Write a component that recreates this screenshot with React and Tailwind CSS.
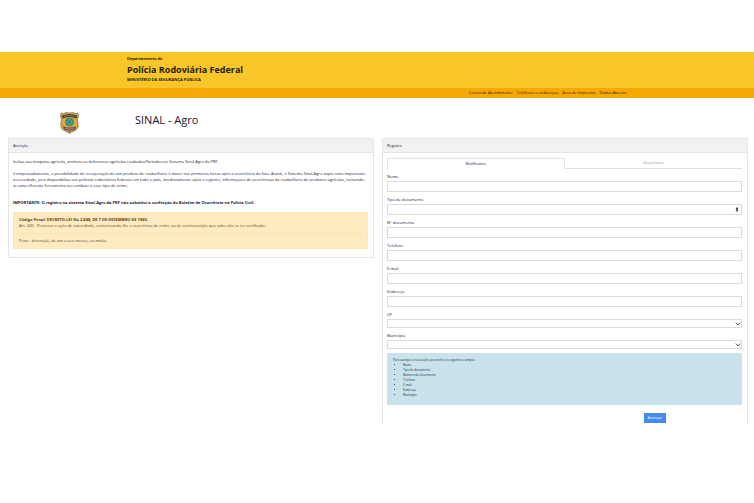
import React from 'react';

const navLinks = ['Canais de Atendimento', 'Telefones e endereços', 'Área de Imprensa', 'Dados Abertos'];

const fields = [
  { id: 'nome', label: 'Nome', type: 'text' },
  { id: 'tipo', label: 'Tipo de documento', type: 'select', icon: 'updown' },
  { id: 'numero', label: 'N° documento', type: 'text' },
  { id: 'telefone', label: 'Telefone', type: 'text' },
  { id: 'email', label: 'E-mail', type: 'text' },
  { id: 'endereco', label: 'Endereço', type: 'text' },
  { id: 'uf', label: 'UF', type: 'select', icon: 'chevron' },
  { id: 'municipio', label: 'Município', type: 'select', icon: 'chevron' },
];

const required = ['Nome', 'Tipo de documento', 'Número do documento', 'Telefone', 'E-mail', 'Endereço', 'Município'];

function Emblem() {
  return (
    <svg viewBox="0 0 38 44" className="h-[22px] w-[19px]" role="img" aria-label="Brasão PRF">
      <path d="M3 2 Q8 5 12 1 Q19 3 26 1 Q30 5 35 2 L37 8 Q33 15 36 22 Q38 34 28 38 Q22 39 19 43 Q16 39 10 38 Q0 34 2 22 Q5 15 1 8Z" fill="#d9ac42" stroke="#795d38" strokeWidth="1.5" />
      <path d="M4 7 Q19 1 34 7 L33 13 Q19 7 5 13Z" fill="#4c3c42" />
      <path d="M8 9 Q19 5 30 9" fill="none" stroke="#e7c987" strokeWidth="1.5" strokeDasharray="2 1.5" />
      <circle cx="19" cy="20" r="10" fill="#b99a37" />
      <circle cx="19" cy="20" r="8" fill="#358b70" />
      <path d="M19 14 L25 20 L19 26 L13 20Z" fill="#b5c85a" />
      <circle cx="19" cy="20" r="4" fill="#2783a5" />
      <path d="M6 28 Q19 34 32 28 L30 35 Q19 39 8 35Z" fill="#6a4a55" />
      <path d="M10 32 Q19 36 28 32" fill="none" stroke="#dfbd9b" strokeWidth="2" strokeDasharray="2 1" />
      <path d="M15 37 H23 L19 41Z" fill="#8f6b51" />
    </svg>
  );
}

function SelectIcon({ kind }) {
  return kind === 'updown' ? (
    <svg viewBox="0 0 4 5" className="pointer-events-none absolute top-[3px] right-[3px] h-[5px] w-1" aria-hidden="true">
      <path d="M2 0 L3.4 2 H0.6Z M2 5 L3.4 3 H0.6Z M1.3 2 H2.7 V3 H1.3Z" fill="#343a40" />
    </svg>
  ) : (
    <svg viewBox="0 0 6 4" className="pointer-events-none absolute top-[3px] right-[1px] h-1 w-[6px]" aria-hidden="true">
      <path d="M0.8 0.6 L3 3 L5.2 0.6" fill="none" stroke="#555" strokeWidth="1" />
    </svg>
  );
}

function Field({ id, label, type, icon }) {
  const height = icon === 'chevron' ? 'h-[9px]' : 'h-[11px]';
  const box = `block w-full appearance-none border border-[#d9dcdf] bg-white px-1 text-[4px] outline-none ${height}`;
  return (
    <div>
      <label htmlFor={id} className="block h-3 pt-1 text-[4px] leading-[8px]">{label}</label>
      {type === 'text' ? (
        <input id={id} type="text" className={box} />
      ) : (
        <div className="relative">
          <select id={id} className={box} />
          <SelectIcon kind={icon} />
        </div>
      )}
    </div>
  );
}

function Card({ title, className, children }) {
  return (
    <section className={`min-w-0 flex-1 border border-[#e6e6e6] ${className}`}>
      <h2 className="h-[14px] border-b border-[#e4e4e4] bg-[#f2f2f2] px-1 text-[4px] leading-[13px]">{title}</h2>
      {children}
    </section>
  );
}

export default function App() {
  return (
    <div className="bg-white pt-[52px] font-['Open_Sans','Noto_Sans',sans-serif] text-[4px] text-[#1c1430]">
      <header>
        <div className="h-9 bg-[#f9c629] pt-1 pl-[127px] text-[#241c10]">
          <p className="text-[4px] leading-[6px] font-bold">Departamento de</p>
          <p className="text-[9px] leading-[15px] font-bold">Polícia Rodoviária Federal</p>
          <p className="text-[4px] leading-[5px] font-bold">MINISTÉRIO DA SEGURANÇA PÚBLICA</p>
        </div>
        <nav className="flex h-[10px] justify-end gap-1 bg-[#f5a703] pr-[127px] leading-[10px] text-[#2e1c04]">
          {navLinks.map((item) => <a key={item} href="#">{item}</a>)}
        </nav>
      </header>

      <div className="flex h-10 items-start pt-[14px] pl-[60px]">
        <Emblem />
        <h1 className="pl-14 text-[11px] leading-[15px] font-medium">SINAL - Agro</h1>
      </div>

      <main className="flex items-start gap-2 pr-[6px] pl-2">
        <Card title="Atenção">
          <div className="pt-[5px] pr-[5px] pb-2 pl-1">
            <p className="leading-[7px]">Inclua sua maquina agrícola, animais ou defensivos agrícolas roubados/furtados no Sistema Sinal-Agro da PRF.</p>
            <p className="mt-[6px] leading-[6px]">Comprovadamente, a possibilidade de recuperação de um produto de roubo/furto é maior nas primeiras horas após a ocorrência do fato. Assim, o Sistema Sinal-Agro supre uma importante necessidade, pois disponibiliza aos policiais rodoviários federais em todo o país, imediatamente após o registro, informações de ocorrências de roubo/furto de produtos agrícolas, tornando-se uma eficiente ferramenta no combate a esse tipo de crime.</p>
            <p className="mt-[10px] leading-[7px] font-bold">IMPORTANTE: O registro no sistema Sinal-Agro da PRF não substitui a confecção do Boletim de Ocorrência na Polícia Civil.</p>
            <div className="mt-[6px] border border-[#ffe7b5] bg-[#ffebc2] px-[5px] py-[3px] text-[#5c4212]">
              <p className="leading-[7px] font-bold">Código Penal: DECRETO-LEI No 2.848, DE 7 DE DEZEMBRO DE 1940.</p>
              <p className="leading-[6px]">Art. 340 - Provocar a ação de autoridade, comunicando-lhe a ocorrência de crime ou de contravenção que sabe não se ter verificado:</p>
              <p className="mt-1 border-t border-[#fae3b2] pt-[3px] leading-[8px]">Pena - detenção, de um a seis meses, ou multa.</p>
            </div>
          </div>
        </Card>

        <Card title="Registro" className="border-b-0">
          <div className="pt-[5px] pr-[5px] pl-1">
            <div className="flex h-[11px]" role="tablist">
              <button type="button" role="tab" aria-selected="true" className="w-1/2 border border-b-0 border-[#e0e2e5]">Notificante</button>
              <button type="button" role="tab" aria-selected="false" className="w-1/2 border-b border-[#e0e2e5] text-[#8b8d93]">Ocorrência</button>
            </div>
            <form onSubmit={(e) => e.preventDefault()}>
              {fields.map((field) => <Field key={field.id} {...field} />)}
              <div className="mt-1 h-[52px] bg-[#c9e2eb] px-[6px] pt-[5px] text-[3px] leading-[5px] text-[#0c2c3e]">
                <p>Para avançar é necessário preencher os seguintes campos:</p>
                <ul className="list-disc pl-[10px]">
                  {required.map((item) => <li key={item}>{item}</li>)}
                </ul>
              </div>
              <div className="mt-2 flex justify-end pr-[76px] pb-[1px]">
                <button type="submit" className="h-[10px] w-[22px] bg-[#448af0] text-[4px] leading-[10px] text-white">Avançar</button>
              </div>
            </form>
          </div>
        </Card>
      </main>
    </div>
  );
}
